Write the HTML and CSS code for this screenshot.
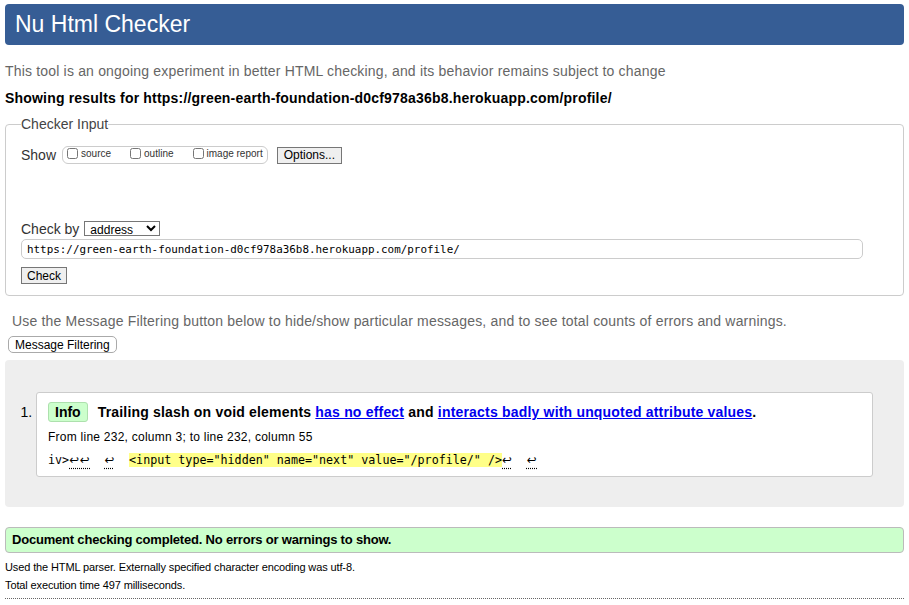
FILE: index.html
```html
<!DOCTYPE html>
<html lang="en">
<head>
<meta charset="utf-8">
<title>Nu Html Checker</title>
<link rel="stylesheet" href="styles.css">
</head>
<body>
<h1 class="title">Nu Html Checker</h1>
<p class="about">This tool is an ongoing experiment in better HTML checking, and its behavior remains subject to change</p>
<p class="showing">Showing results for https://green-earth-foundation-d0cf978a36b8.herokuapp.com/profile/</p>
<form class="checker">
  <fieldset class="input-set">
    <legend>Checker Input</legend>
    <div class="show-row">
      <span class="row-label">Show</span>
      <span class="show-options">
        <label class="opt"><input type="checkbox"><span>source</span></label>
        <label class="opt"><input type="checkbox"><span>outline</span></label>
        <label class="opt"><input type="checkbox"><span>image report</span></label>
      </span>
      <button type="button" class="btn">Options...</button>
    </div>
    <div class="checkby-row">
      <span class="row-label">Check by</span>
      <select class="select"><option>address</option></select>
    </div>
    <input class="url" type="text" value="https://green-earth-foundation-d0cf978a36b8.herokuapp.com/profile/">
    <button type="button" class="btn check">Check</button>
  </fieldset>
</form>
<p class="filter-note">Use the Message Filtering button below to hide/show particular messages, and to see total counts of errors and warnings.</p>
<button type="button" class="btn-round">Message Filtering</button>
<div class="results">
  <ol class="messages">
    <li class="msg">
      <p class="msg-head"><strong class="badge">Info</strong><span class="msg-text">Trailing slash on void elements <a href="#">has no effect</a> and <a href="#">interacts badly with unquoted attribute values</a>.</span></p>
      <p class="location">From line 232, column 3; to line 232, column 55</p>
      <p class="extract"><code>iv&gt;<u>↩</u><u>↩</u>  <u>↩</u>  <b>&lt;input type="hidden" name="next" value="/profile/" /&gt;</b><u>↩</u>  <u>↩</u></code></p>
    </li>
  </ol>
</div>
<p class="success">Document checking completed. No errors or warnings to show.</p>
<p class="meta first">Used the HTML parser. Externally specified character encoding was utf-8.</p>
<p class="meta">Total execution time 497 milliseconds.</p>
<hr class="footer-rule">
</body>
</html>
```

FILE: styles.css
```css
* { box-sizing: border-box; }
html { overflow: hidden; }
body {
  margin: 0;
  padding: 4px 5px 0;
  font-family: "Liberation Sans", Arial, sans-serif;
  font-size: 14px;
  line-height: 16px;
  color: #000;
  background: #fff;
}
.title {
  margin: 0;
  height: 41px;
  padding: 0 10px;
  background: #365d95;
  color: #fff;
  font-size: 23px;
  font-weight: normal;
  line-height: 41px;
  border-radius: 4px;
}
.about { margin: 18px 0 0; color: #666; letter-spacing: 0.18px; }
.showing { margin: 11px 0 0; font-weight: bold; letter-spacing: 0.19px; }
.checker { margin: 10px 0 0; }
.input-set {
  margin: 0;
  padding: 0 15px 11px;
  border: 1px solid #ccc;
  border-radius: 4px;
  min-width: 0;
}
.input-set legend { padding: 0; color: #444; line-height: 16px; }
.row-label { color: #333; }
.show-row { display: flex; align-items: center; height: 18px; margin-top: 14px; }
.show-options {
  display: flex;
  align-items: center;
  height: 18px;
  margin-left: 6px;
  padding: 0 4px 3px 4px;
  border: 1px solid #ccc;
  border-radius: 6px;
}
.opt { display: flex; align-items: center; margin-right: 19px; font-size: 10px; line-height: 12px; color: #333; }
.opt:last-child { margin-right: 0; }
.opt input { width: 11px; height: 11px; margin: 0 3px 0 0; }
.btn {
  height: 17px;
  padding: 0 6px;
  margin-left: 9px;
  font: 12px "Liberation Sans", Arial, sans-serif;
  color: #000;
  background: #efefef;
  border: 1px solid #767676;
  border-radius: 0;
}
.checkby-row { display: flex; align-items: center; height: 15px; margin-top: 57px; }
.select {
  width: 76px;
  height: 15px;
  margin-left: 5px;
  padding: 0 0 0 1px;
  font: 12px "Liberation Sans", Arial, sans-serif;
  color: #000;
  background: #fff;
  border: 1px solid #767676;
  border-radius: 0;
}
.url {
  display: block;
  width: 842px;
  height: 20px;
  margin: 3px 0 0;
  padding: 0 5px;
  font: 10.9px "DejaVu Sans Mono", monospace;
  color: #000;
  border: 1px solid #ccc;
  border-radius: 5px;
}
.btn.check { display: block; margin: 8px 0 0; padding: 0 5px; }
.filter-note { margin: 17px 0 0 7px; color: #666; letter-spacing: 0.18px; }
.btn-round {
  display: block;
  height: 17px;
  margin: 7px 0 0 3px;
  padding: 0 6px;
  font: 12px "Liberation Sans", Arial, sans-serif;
  color: #000;
  background: #fff;
  border: 1px solid #aaa;
  border-radius: 5px;
}
.results {
  margin-top: 7px;
  padding: 32px 31px 30px;
  background: #eee;
  border-radius: 4px;
}
.messages { margin: 0; padding: 0; list-style: decimal outside; }
.msg {
  background: #fff;
  border: 1px solid #ccc;
  border-radius: 3px;
  padding: 9px 11px 9px;
}
.msg-head { margin: 0; height: 20px; line-height: 20px; }
.badge {
  display: inline-block;
  height: 20px;
  padding: 0 6px;
  margin-right: 10px;
  line-height: 18px;
  background: #cfc;
  border: 1px solid #ade0ad;
  border-radius: 3px;
  vertical-align: top;
}
.msg-text { font-weight: bold; letter-spacing: 0.19px; }
.msg-text a { color: #00e; text-decoration: underline; }
.location { margin: 8px 0 0; font-size: 12px; line-height: 14px; letter-spacing: 0.25px; }
.extract { margin: 8px 0 0; line-height: 14px; white-space: pre; }
.extract code { font: 11.7px "DejaVu Sans Mono", monospace; }
.extract b { font-weight: normal; background: #ff8; }
.extract u {
  font-family: "DejaVu Sans", sans-serif;
  letter-spacing: 0.8px;
  text-decoration: underline dotted;
  text-underline-offset: 4px;
}
.success {
  margin: 20px 0 0;
  padding: 1px 6px;
  line-height: 22px;
  background: #cfc;
  border: 1px solid #bbb;
  border-radius: 4px;
  font-size: 13px;
  font-weight: bold;
  letter-spacing: -0.2px;
}
.meta { margin: 4px 0 0; font-size: 11px; line-height: 14px; letter-spacing: -0.12px; }
.meta.first { margin-top: 7px; }
.footer-rule { margin: 6px 0 0; height: 0; border: 0; border-top: 1px dotted #666; }
```
